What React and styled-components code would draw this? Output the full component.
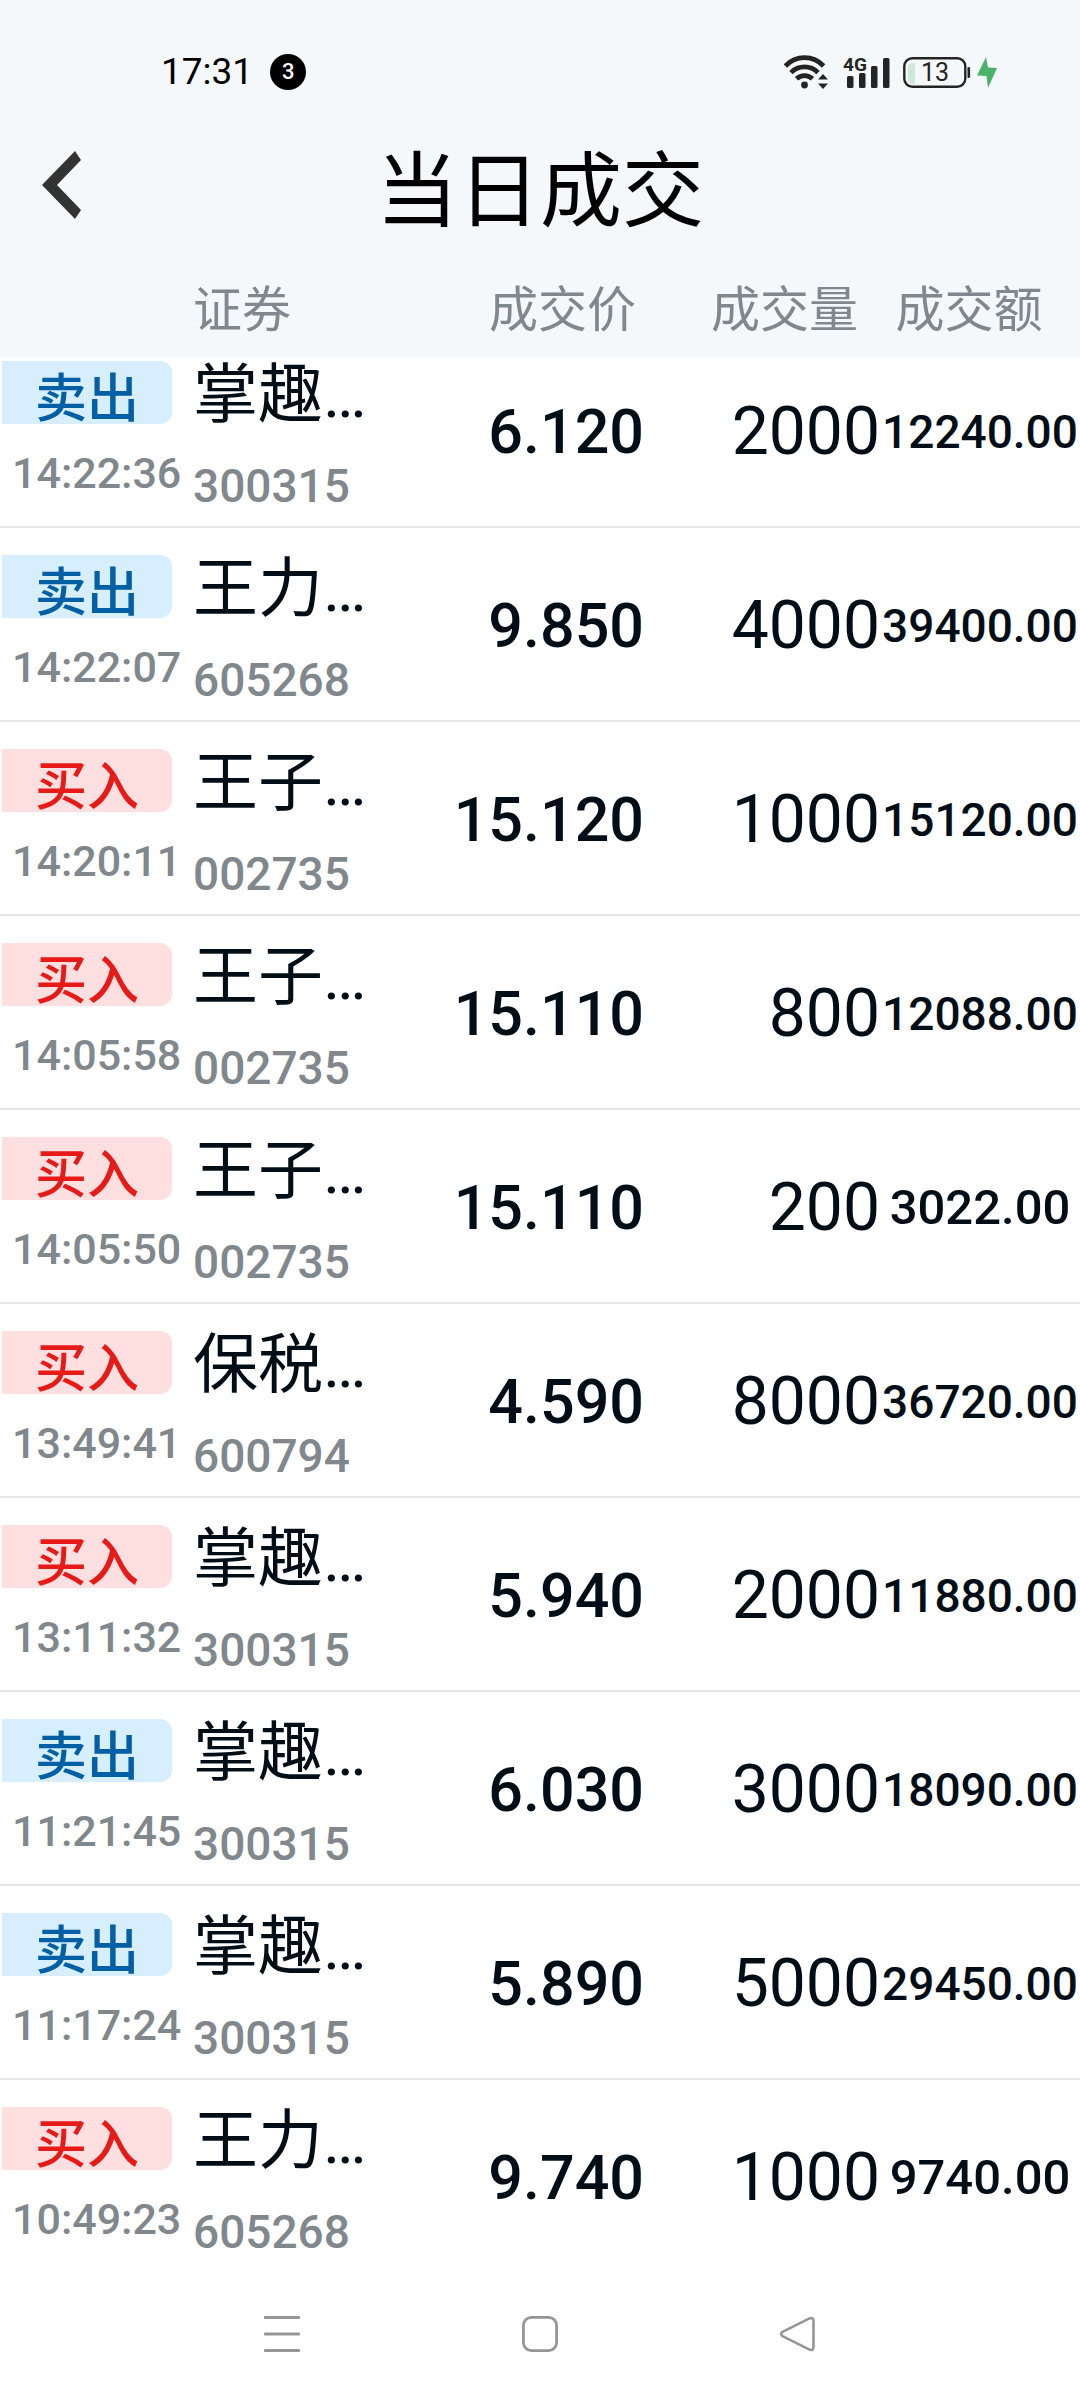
import React from 'react';
import styled, { createGlobalStyle } from 'styled-components';

const GlobalStyle = createGlobalStyle`
    * {
        box-sizing: border-box;
    }

    body {
        margin: 0;
        background: #ffffff;
        color: #010e18;
        font-family: Roboto, 'Noto Sans CJK SC', sans-serif;
    }
`

const Screen = styled.div`
    display: flex;
    flex-direction: column;
    min-height: 100vh;
`

const StatusBar = styled.div`
    display: flex;
    align-items: center;
    justify-content: space-between;
    height: 144px;
    padding: 0 83px 0 161px;
    background: #f4f8fb;
    color: #000000;
`

const StatusGroup = styled.div`
    display: flex;
    align-items: center;
    gap: ${props => props.$gap}px;
`

const StatusTime = styled.span`
    font-size: 37px;
    line-height: 40px;
`

const NoticeCount = styled.span`
    width: 36px;
    height: 36px;
    border-radius: 50%;
    background: #000000;
    color: #ffffff;
    font-size: 22px;
    font-weight: 500;
    line-height: 36px;
    text-align: center;
`

const TitleBar = styled.header`
    display: grid;
    grid-template-columns: 120px 1fr 120px;
    align-items: start;
    height: 114px;
    background: #f4f8fb;
`

const BackButton = styled.button`
    display: flex;
    align-items: center;
    height: 82px;
    padding: 0 0 0 42px;
    border: 0;
    background: none;
`

const Title = styled.h1`
    margin: 0;
    color: #000000;
    font-size: 82px;
    font-weight: 400;
    line-height: 96px;
    text-align: center;
`

const DealTable = styled.table`
    display: block;
    flex: 1;
`

const TableHead = styled.thead`
    display: block;
    position: relative;
    z-index: 1;
    background: #f4f8fb;
`

/* the list is scrolled a little way under the head */
const TableBody = styled.tbody`
    display: block;
    margin-top: -24px;
`

const Row = styled.tr`
    display: grid;
    grid-template-columns: 193px 1fr 244px 236px 200px;
`

const DealRow = styled(Row)`
    height: 194px;
    border-bottom: 2px solid #e5e5e5;

    &:last-child {
        border-bottom-color: transparent;
    }
`

const HeadCell = styled.th`
    height: 100px;
    padding: 0 ${props => props.$inset || 0}px 0 0;
    color: #80878d;
    font-size: 49px;
    font-weight: 400;
    line-height: 106px;
    text-align: ${props => props.$align || 'left'};
`

const StackCell = styled.td`
    padding: 27px 0 0;
`

const NumberCell = styled.td`
    align-self: center;
    padding: 4px 0 0;
    font-size: ${props => props.$size}px;
    font-weight: ${props => props.$weight || 400};
    line-height: 72px;
    text-align: right;
`

const AmountCell = styled(NumberCell)`
    text-align: center;
`

const SideBadge = styled.div`
    width: 170px;
    height: 63px;
    margin-left: 2px;
    border-radius: 0 12px 12px 0;
    font-size: 52px;
    font-weight: 500;
    line-height: 78px;
    text-align: center;

    &.sell {
        background: #d7eeff;
        color: #005fa5;
    }

    &.buy {
        background: #ffdfe0;
        color: #e61a17;
    }
`

const DealTime = styled.div`
    margin: 27px 0 0 12px;
    color: #80878d;
    font-size: 43px;
    font-weight: 500;
    line-height: 44px;
    white-space: nowrap;
`

const StockName = styled.div`
    font-size: 65px;
    line-height: 68px;
    white-space: nowrap;
`

const StockCode = styled.div`
    margin-top: 34px;
    color: #80878d;
    font-size: 46px;
    font-weight: 500;
    line-height: 46px;
`

const NavBar = styled.nav`
    display: grid;
    grid-template-columns: repeat(3, 1fr);
    height: 132px;
    padding: 0 153px 12px;
    background: #ffffff;
`

const NavButton = styled.button`
    display: flex;
    align-items: center;
    justify-content: center;
    padding: 0;
    border: 0;
    background: none;
`

const deals = [
    { side: 'sell', time: '14:22:36', name: '掌趣…', code: '300315', price: '6.120', volume: '2000', amount: '12240.00' },
    { side: 'sell', time: '14:22:07', name: '王力…', code: '605268', price: '9.850', volume: '4000', amount: '39400.00' },
    { side: 'buy', time: '14:20:11', name: '王子…', code: '002735', price: '15.120', volume: '1000', amount: '15120.00' },
    { side: 'buy', time: '14:05:58', name: '王子…', code: '002735', price: '15.110', volume: '800', amount: '12088.00' },
    { side: 'buy', time: '14:05:50', name: '王子…', code: '002735', price: '15.110', volume: '200', amount: '3022.00' },
    { side: 'buy', time: '13:49:41', name: '保税…', code: '600794', price: '4.590', volume: '8000', amount: '36720.00' },
    { side: 'buy', time: '13:11:32', name: '掌趣…', code: '300315', price: '5.940', volume: '2000', amount: '11880.00' },
    { side: 'sell', time: '11:21:45', name: '掌趣…', code: '300315', price: '6.030', volume: '3000', amount: '18090.00' },
    { side: 'sell', time: '11:17:24', name: '掌趣…', code: '300315', price: '5.890', volume: '5000', amount: '29450.00' },
    { side: 'buy', time: '10:49:23', name: '王力…', code: '605268', price: '9.740', volume: '1000', amount: '9740.00' },
];

const sideLabels = { sell: '卖出', buy: '买入' };

function WifiIcon() {
    return (
        <svg width="45" height="36" viewBox="0 0 45 36" fill="none" stroke="#242424" strokeWidth="4.8">
            <path d="M1.4 12 A26 26 0 0 1 39.6 12" />
            <path d="M7 18.6 A19 19 0 0 1 34 18.6" />
            <path d="M12.5 24.8 A11.5 11.5 0 0 1 28.5 24.8" />
            <circle cx="20.5" cy="31" r="3.4" fill="#242424" stroke="none" />
            <path d="M34 25.5 L39 20 L44 25.5 Z M34 29.5 L39 35 L44 29.5 Z" fill="#242424" stroke="none" />
        </svg>
    )
}

function SignalIcon() {
    return (
        <svg width="50" height="40" viewBox="-2 -2 50 40" fill="#242424">
            <text x="0" y="17" fontFamily="Roboto, sans-serif" fontWeight="700" fontSize="19">4G</text>
            <rect x="4" y="22" width="6.5" height="12" rx="1.5" />
            <rect x="16" y="19" width="6.5" height="15" rx="1.5" />
            <rect x="28" y="12" width="6.5" height="22" rx="1.5" />
            <rect x="40" y="4" width="6.5" height="30" rx="1.5" />
        </svg>
    )
}

function BatteryIcon() {
    return (
        <svg width="68" height="36" viewBox="0 0 68 36">
            <rect x="1.3" y="4.3" width="61" height="28.4" rx="8" fill="none" stroke="#242424" strokeWidth="2.4" />
            <path d="M12 9 V30 H10 Q5 30 5 25 V14 Q5 9 10 9 Z" fill="#cfe8d8" />
            <rect x="64.5" y="13" width="2.6" height="11" rx="1.2" fill="#242424" />
            <text x="32" y="27" textAnchor="middle" fontFamily="Roboto, sans-serif" fontSize="25" fill="#242424">13</text>
        </svg>
    )
}

function BoltIcon() {
    return (
        <svg width="20" height="36" viewBox="0 0 20 36" fill="#4bb269">
            <path d="M9 3 L0 21.5 L9.5 22 L11 34 L20 14 L11 13.5 Z" />
        </svg>
    )
}

function App() {

    return (
        <Screen>
            <GlobalStyle />
            <StatusBar>
                <StatusGroup $gap={17}>
                    <StatusTime>17:31</StatusTime>
                    <NoticeCount>3</NoticeCount>
                </StatusGroup>
                <StatusGroup $gap={12}>
                    <WifiIcon />
                    <SignalIcon />
                    <StatusGroup $gap={6}>
                        <BatteryIcon />
                        <BoltIcon />
                    </StatusGroup>
                </StatusGroup>
            </StatusBar>
            <TitleBar>
                <BackButton aria-label="返回">
                    <svg width="40" height="68" viewBox="0 0 40 68" fill="#333333">
                        <path d="M33 0 L39 9 L15 34 L39 59 L33 68 L0 34 Z" />
                    </svg>
                </BackButton>
                <Title>当日成交</Title>
            </TitleBar>
            <DealTable>
                <TableHead>
                    <Row>
                        <HeadCell />
                        <HeadCell>证券</HeadCell>
                        <HeadCell $align="right" $inset={8}>成交价</HeadCell>
                        <HeadCell $align="right" $inset={22}>成交量</HeadCell>
                        <HeadCell $align="center" $inset={22}>成交额</HeadCell>
                    </Row>
                </TableHead>
                <TableBody>
                {
                    deals.map((deal, i) => (
                        <DealRow key={i}>
                            <StackCell>
                                <SideBadge className={deal.side}>{sideLabels[deal.side]}</SideBadge>
                                <DealTime>{deal.time}</DealTime>
                            </StackCell>
                            <StackCell>
                                <StockName>{deal.name}</StockName>
                                <StockCode>{deal.code}</StockCode>
                            </StackCell>
                            <NumberCell $size={61} $weight={500}>{deal.price}</NumberCell>
                            <NumberCell $size={66}>{deal.volume}</NumberCell>
                            <AmountCell $size={deal.amount.length > 7 ? 46 : 49} $weight={500}>{deal.amount}</AmountCell>
                        </DealRow>
                    ))
                }
                </TableBody>
            </DealTable>
            <NavBar>
                <NavButton aria-label="菜单">
                    <svg width="36" height="36" viewBox="0 0 36 36" fill="#969696">
                        <rect y="0" width="36" height="3" rx="1" />
                        <rect y="16.5" width="36" height="3" rx="1" />
                        <rect y="33" width="36" height="3" rx="1" />
                    </svg>
                </NavButton>
                <NavButton aria-label="主页">
                    <svg width="36" height="36" viewBox="0 0 36 36" fill="none" stroke="#969696" strokeWidth="2.8">
                        <rect x="1.4" y="1.4" width="33.2" height="33.2" rx="8" />
                    </svg>
                </NavButton>
                <NavButton aria-label="后退">
                    <svg width="36" height="36" viewBox="0 0 36 36" fill="none" stroke="#969696" strokeWidth="2.6" strokeLinejoin="round">
                        <path d="M2.5 15.8 L29.5 2.4 Q33.5 1 33.5 5 V31 Q33.5 35 29.5 33.6 L2.5 20.2 Q0 18 2.5 15.8 Z" />
                    </svg>
                </NavButton>
            </NavBar>
        </Screen>
    )
}

export default App;
